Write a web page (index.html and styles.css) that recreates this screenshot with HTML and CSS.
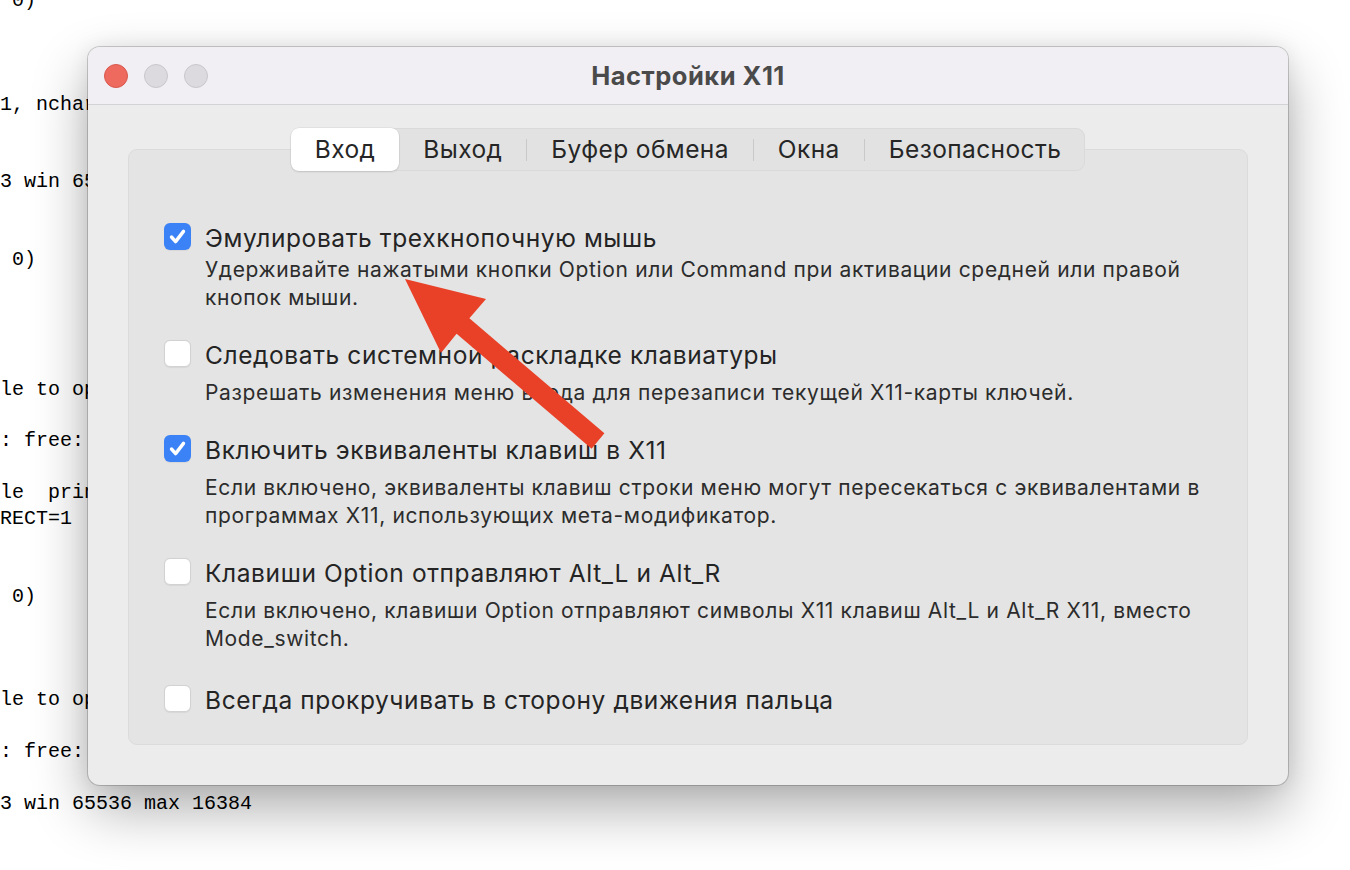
FILE: index.html
```html
<!DOCTYPE html>
<html lang="ru">
<head>
<meta charset="utf-8">
<title>Настройки X11</title>
<link rel="stylesheet" href="styles.css">
</head>
<body>
<pre class="terminal"> 0)



1, nchars=1


3 win 65536 max 16384


 0)




le to open display
 
: free: 0
 
le  print
RECT=1 .


 0)



le to open display
 
: free: 0
 
3 win 65536 max 16384</pre>

<div class="window">
  <div class="titlebar">
    <div class="lights">
      <span class="light red"></span>
      <span class="light gray"></span>
      <span class="light gray"></span>
    </div>
    <div class="title">Настройки X11</div>
  </div>
  <div class="content">
    <div class="tabs">
      <div class="tab selected">Вход</div>
      <div class="tab">Выход</div>
      <span class="sep"></span>
      <div class="tab">Буфер обмена</div>
      <span class="sep"></span>
      <div class="tab">Окна</div>
      <span class="sep"></span>
      <div class="tab">Безопасность</div>
    </div>
    <div class="panel">
      <div class="item">
        <span class="box checked"><svg viewBox="0 0 27 27" width="27" height="27"><path d="M7.5 14 L11.6 18.6 L19.5 8.4" fill="none" stroke="#fff" stroke-width="3.4" stroke-linecap="round" stroke-linejoin="round"/></svg></span>
        <div class="label">Эмулировать трехкнопочную мышь</div>
        <div class="desc tight">Удерживайте нажатыми кнопки Option или Command при активации средней или правой<br>кнопок мыши.</div>
      </div>
      <div class="item">
        <span class="box"></span>
        <div class="label">Следовать системной раскладке клавиатуры</div>
        <div class="desc">Разрешать изменения меню ввода для перезаписи текущей X11-карты ключей.</div>
      </div>
      <div class="item">
        <span class="box checked"><svg viewBox="0 0 27 27" width="27" height="27"><path d="M7.5 14 L11.6 18.6 L19.5 8.4" fill="none" stroke="#fff" stroke-width="3.4" stroke-linecap="round" stroke-linejoin="round"/></svg></span>
        <div class="label">Включить эквиваленты клавиш в X11</div>
        <div class="desc">Если включено, эквиваленты клавиш строки меню могут пересекаться с эквивалентами в<br>программах X11, использующих мета-модификатор.</div>
      </div>
      <div class="item">
        <span class="box"></span>
        <div class="label">Клавиши Option отправляют Alt_L и Alt_R</div>
        <div class="desc">Если включено, клавиши Option отправляют символы X11 клавиш Alt_L и Alt_R X11, вместо<br>Mode_switch.</div>
      </div>
      <div class="item last">
        <span class="box"></span>
        <div class="label">Всегда прокручивать в сторону движения пальца</div>
      </div>
    </div>
  </div>
</div>

<svg class="arrow" width="1350" height="870" viewBox="0 0 1350 870">
  <polygon points="405,279 486,299 469.4,318.3 604.4,433.3 591.6,448.7 456.6,333.7 441,353" fill="#e94128"/>
</svg>
</body>
</html>
```

FILE: styles.css
```css
html, body {
  margin: 0;
  padding: 0;
  background: #ffffff;
  width: 1350px;
  height: 870px;
  overflow: hidden;
}

body {
  position: relative;
}

.terminal {
  margin: -12px 0 0 0;
  font-family: "Liberation Mono", "DejaVu Sans Mono", monospace;
  font-size: 20px;
  line-height: 25.9px;
  color: #000;
}

.window {
  position: absolute;
  left: 88px;
  top: 47px;
  width: 1200px;
  height: 738px;
  border-radius: 12px;
  background: #ececec;
  box-shadow: 0 0 0 1px rgba(0, 0, 0, 0.18), 0 24px 56px rgba(0, 0, 0, 0.32), 0 0 20px rgba(0, 0, 0, 0.08);
  overflow: hidden;
  font-family: Inter, "Noto Sans", sans-serif;
  display: flex;
  flex-direction: column;
}

.titlebar {
  height: 57px;
  background: #f1eff4;
  border-bottom: 1px solid #d3d2d5;
  position: relative;
  display: flex;
  align-items: center;
  justify-content: center;
  flex: none;
}

.lights {
  position: absolute;
  left: 16px;
  top: 17px;
  display: flex;
  gap: 16px;
}

.light {
  width: 24px;
  height: 24px;
  border-radius: 50%;
  box-sizing: border-box;
}

.light.red {
  background: #ee6a5f;
  border: 1px solid #d8574c;
}

.light.gray {
  background: #dcdadf;
  border: 1px solid #c9c7cc;
}

.title {
  font-size: 25.5px;
  font-weight: 700;
  color: #4a4a4a;
  letter-spacing: 0.5px;
}

.content {
  flex: 1;
  padding: 23px 40px 40px;
  display: flex;
  flex-direction: column;
}

.tabs {
  align-self: center;
  display: flex;
  align-items: center;
  height: 43px;
  background: #e2e2e2;
  border-radius: 9px;
  box-shadow: inset 0 0 0 1px #dadada;
  position: relative;
  z-index: 1;
  margin-bottom: -22px;
}

.tab {
  height: 43px;
  line-height: 42px;
  padding: 0 24px;
  font-size: 24.5px;
  letter-spacing: 0.4px;
  color: #262626;
  box-sizing: border-box;
}

.tab.selected {
  background: #ffffff;
  border-radius: 8px;
  box-shadow: 0 1px 2px rgba(0, 0, 0, 0.12), 0 0 0 0.5px rgba(0, 0, 0, 0.08);
}

.sep {
  width: 1px;
  height: 22px;
  background: #c9c9c9;
}

.panel {
  flex: 1;
  background: #e4e4e4;
  border: 1px solid #dbdbdb;
  border-radius: 9px;
  padding: 72px 20px 28px 35px;
  display: flex;
  flex-direction: column;
  gap: 27px;
}

.item {
  display: grid;
  grid-template-columns: 27px 1fr;
  column-gap: 14px;
  align-items: start;
}

.item.last {
  margin-top: 4px;
}

.box {
  grid-row: 1;
  grid-column: 1;
  width: 27px;
  height: 27px;
  margin-top: 1px;
  border-radius: 6px;
  background: #ffffff;
  box-sizing: border-box;
  border: 1px solid #d2d2d2;
  box-shadow: 0 0.5px 1px rgba(0, 0, 0, 0.06);
}

.box svg {
  display: block;
}

.box.checked {
  background: #3b82f7;
  border: none;
}

.label {
  grid-column: 2;
  font-size: 24.5px;
  letter-spacing: 0.6px;
  line-height: 32px;
  color: #242424;
  white-space: nowrap;
}

.desc {
  grid-column: 2;
  margin-top: 8px;
  font-size: 21px;
  letter-spacing: 0.65px;
  line-height: 28px;
  color: #2c2c2c;
  white-space: nowrap;
}

.desc.tight {
  margin-top: 2px;
}

.arrow {
  position: absolute;
  left: 0;
  top: 0;
  pointer-events: none;
}
```
